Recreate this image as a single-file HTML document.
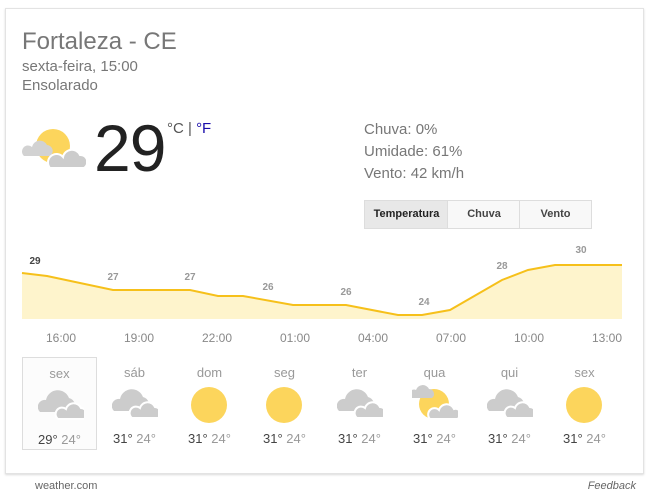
<!DOCTYPE html>
<html><head><meta charset="utf-8"><style>
body{margin:0;width:649px;height:500px;background:#fff;font-family:"Liberation Sans",Arial,sans-serif;position:relative;overflow:hidden}
.card{position:absolute;left:5px;top:8px;width:637px;height:464px;border:1px solid #e3e3e3;box-shadow:0 1px 2px rgba(0,0,0,.15);background:#fff}
.a{position:absolute;white-space:nowrap}
.btn{position:absolute;top:200px;height:27px;border:1px solid #ddd;background:#f8f8f8;font-size:11px;font-weight:bold;color:#444;text-align:center;line-height:27px}
.t{font-size:12px;color:#888;top:331px;width:60px;text-align:center}
.d{position:absolute;top:357px;width:75px;height:93px;text-align:center}
.d .n{margin-top:8px;font-size:13px;color:#999}
.d .v{position:absolute;top:74px;width:75px;font-size:13px;color:#444}
.d .v span{color:#999}
.d svg{position:absolute;left:15px;top:26px}
.cl{font-size:10px;font-weight:bold;color:#999;text-align:center;width:30px}
</style></head><body>
<div class="card"></div>
<div class="a" style="left:22px;top:28px;font-size:24px;color:#777">Fortaleza - CE</div>
<div class="a" style="left:22px;top:58px;font-size:15px;color:#777">sexta-feira, 15:00</div>
<div class="a" style="left:22px;top:77px;font-size:15px;color:#777">Ensolarado</div>
<svg class="a" style="left:22px;top:124px" width="64" height="46"><circle cx="31" cy="22" r="17" fill="#fcd55c"/><path d="M2 32h26a6 6 0 0 0-3-11 8 8 0 0 0-15 2 5 5 0 0 0-8 9z" fill="#d2d2d2"/><path d="M28 44h34a7 7 0 0 0-4-13 9 9 0 0 0-17 2 6 6 0 0 0-13 11z" fill="#ccc" stroke="#fff" stroke-width="2"/></svg>
<div class="a" style="left:94px;top:110px;font-size:66px;color:#222;letter-spacing:-1px">29</div>
<div class="a" style="left:167px;top:120px;font-size:15px;color:#555">°C | <span style="color:#1a0dab">°F</span></div>
<div class="a" style="left:364px;top:119px;font-size:15px;color:#777;line-height:22px">Chuva: 0%<br>Umidade: 61%<br>Vento: 42 km/h</div>
<div class="btn" style="left:364px;width:83px;background:#e8e8e8;color:#222">Temperatura</div>
<div class="btn" style="left:447px;width:72px">Chuva</div>
<div class="btn" style="left:519px;width:71px">Vento</div>
<svg class="a" style="left:0;top:240px" width="649" height="90">
<polygon points="22,33 47,36 113,50 190,50 218,56 243,56 293,65 346,65 398,75 422,75 450,70 502,40 528,30 555,25 622,25 622,79 22,79" fill="#fef4cc"/>
<polyline points="22,33 47,36 113,50 190,50 218,56 243,56 293,65 346,65 398,75 422,75 450,70 502,40 528,30 555,25 622,25" fill="none" stroke="#f6c01a" stroke-width="2"/>
</svg>
<div class="a cl" style="left:20px;top:256px;color:#444">29</div>
<div class="a cl" style="left:98px;top:272px">27</div>
<div class="a cl" style="left:175px;top:272px">27</div>
<div class="a cl" style="left:253px;top:282px">26</div>
<div class="a cl" style="left:331px;top:287px">26</div>
<div class="a cl" style="left:409px;top:297px">24</div>
<div class="a cl" style="left:487px;top:261px">28</div>
<div class="a cl" style="left:566px;top:245px">30</div>
<div class="a t" style="left:31px">16:00</div><div class="a t" style="left:109px">19:00</div><div class="a t" style="left:187px">22:00</div><div class="a t" style="left:265px">01:00</div><div class="a t" style="left:343px">04:00</div><div class="a t" style="left:421px">07:00</div><div class="a t" style="left:499px">10:00</div><div class="a t" style="left:577px">13:00</div>
<div class="d" style="left:22px;border:1px solid #ddd;box-sizing:border-box;background:#fcfcfc"><div class="n">sex</div><svg width="46" height="36"><path d="M2 28h32a8 8 0 0 0-3-14 12 12 0 0 0-23 2 7 7 0 0 0-6 12z" fill="#ccc"/><path d="M20 35h26a6 6 0 0 0-3-11 8 8 0 0 0-15 1 5 5 0 0 0-8 10z" fill="#ccc" stroke="#fff" stroke-width="2"/></svg><div class="v" style="left:-1px">29° <span>24°</span></div></div>
<div class="d" style="left:97px"><div class="n">sáb</div><svg width="46" height="36"><path d="M2 28h32a8 8 0 0 0-3-14 12 12 0 0 0-23 2 7 7 0 0 0-6 12z" fill="#ccc"/><path d="M20 35h26a6 6 0 0 0-3-11 8 8 0 0 0-15 1 5 5 0 0 0-8 10z" fill="#ccc" stroke="#fff" stroke-width="2"/></svg><div class="v">31° <span>24°</span></div></div>
<div class="d" style="left:172px"><div class="n">dom</div><svg width="46" height="40"><circle cx="22" cy="22" r="18" fill="#fcd55c"/></svg><div class="v">31° <span>24°</span></div></div>
<div class="d" style="left:247px"><div class="n">seg</div><svg width="46" height="40"><circle cx="22" cy="22" r="18" fill="#fcd55c"/></svg><div class="v">31° <span>24°</span></div></div>
<div class="d" style="left:322px"><div class="n">ter</div><svg width="46" height="36"><path d="M2 28h32a8 8 0 0 0-3-14 12 12 0 0 0-23 2 7 7 0 0 0-6 12z" fill="#ccc"/><path d="M20 35h26a6 6 0 0 0-3-11 8 8 0 0 0-15 1 5 5 0 0 0-8 10z" fill="#ccc" stroke="#fff" stroke-width="2"/></svg><div class="v">31° <span>24°</span></div></div>
<div class="d" style="left:397px"><div class="n">qua</div><svg width="46" height="38"><circle cx="22" cy="21" r="15" fill="#fcd55c"/><path d="M0 15h20a5 5 0 0 0-3-9 7 7 0 0 0-13 1 4 4 0 0 0-4 8z" fill="#ccc"/><path d="M18 36h27a5 5 0 0 0-3-10 8 8 0 0 0-15 1 5 5 0 0 0-9 9z" fill="#ccc" stroke="#fff" stroke-width="2"/></svg><div class="v">31° <span>24°</span></div></div>
<div class="d" style="left:472px"><div class="n">qui</div><svg width="46" height="36"><path d="M2 28h32a8 8 0 0 0-3-14 12 12 0 0 0-23 2 7 7 0 0 0-6 12z" fill="#ccc"/><path d="M20 35h26a6 6 0 0 0-3-11 8 8 0 0 0-15 1 5 5 0 0 0-8 10z" fill="#ccc" stroke="#fff" stroke-width="2"/></svg><div class="v">31° <span>24°</span></div></div>
<div class="d" style="left:547px"><div class="n">sex</div><svg width="46" height="40"><circle cx="22" cy="22" r="18" fill="#fcd55c"/></svg><div class="v">31° <span>24°</span></div></div>
<div class="a" style="left:35px;top:480px;font-size:11px;color:#666">weather.com</div>
<div class="a" style="right:13px;top:480px;font-size:11px;color:#666;font-style:italic">Feedback</div>
</body></html>
